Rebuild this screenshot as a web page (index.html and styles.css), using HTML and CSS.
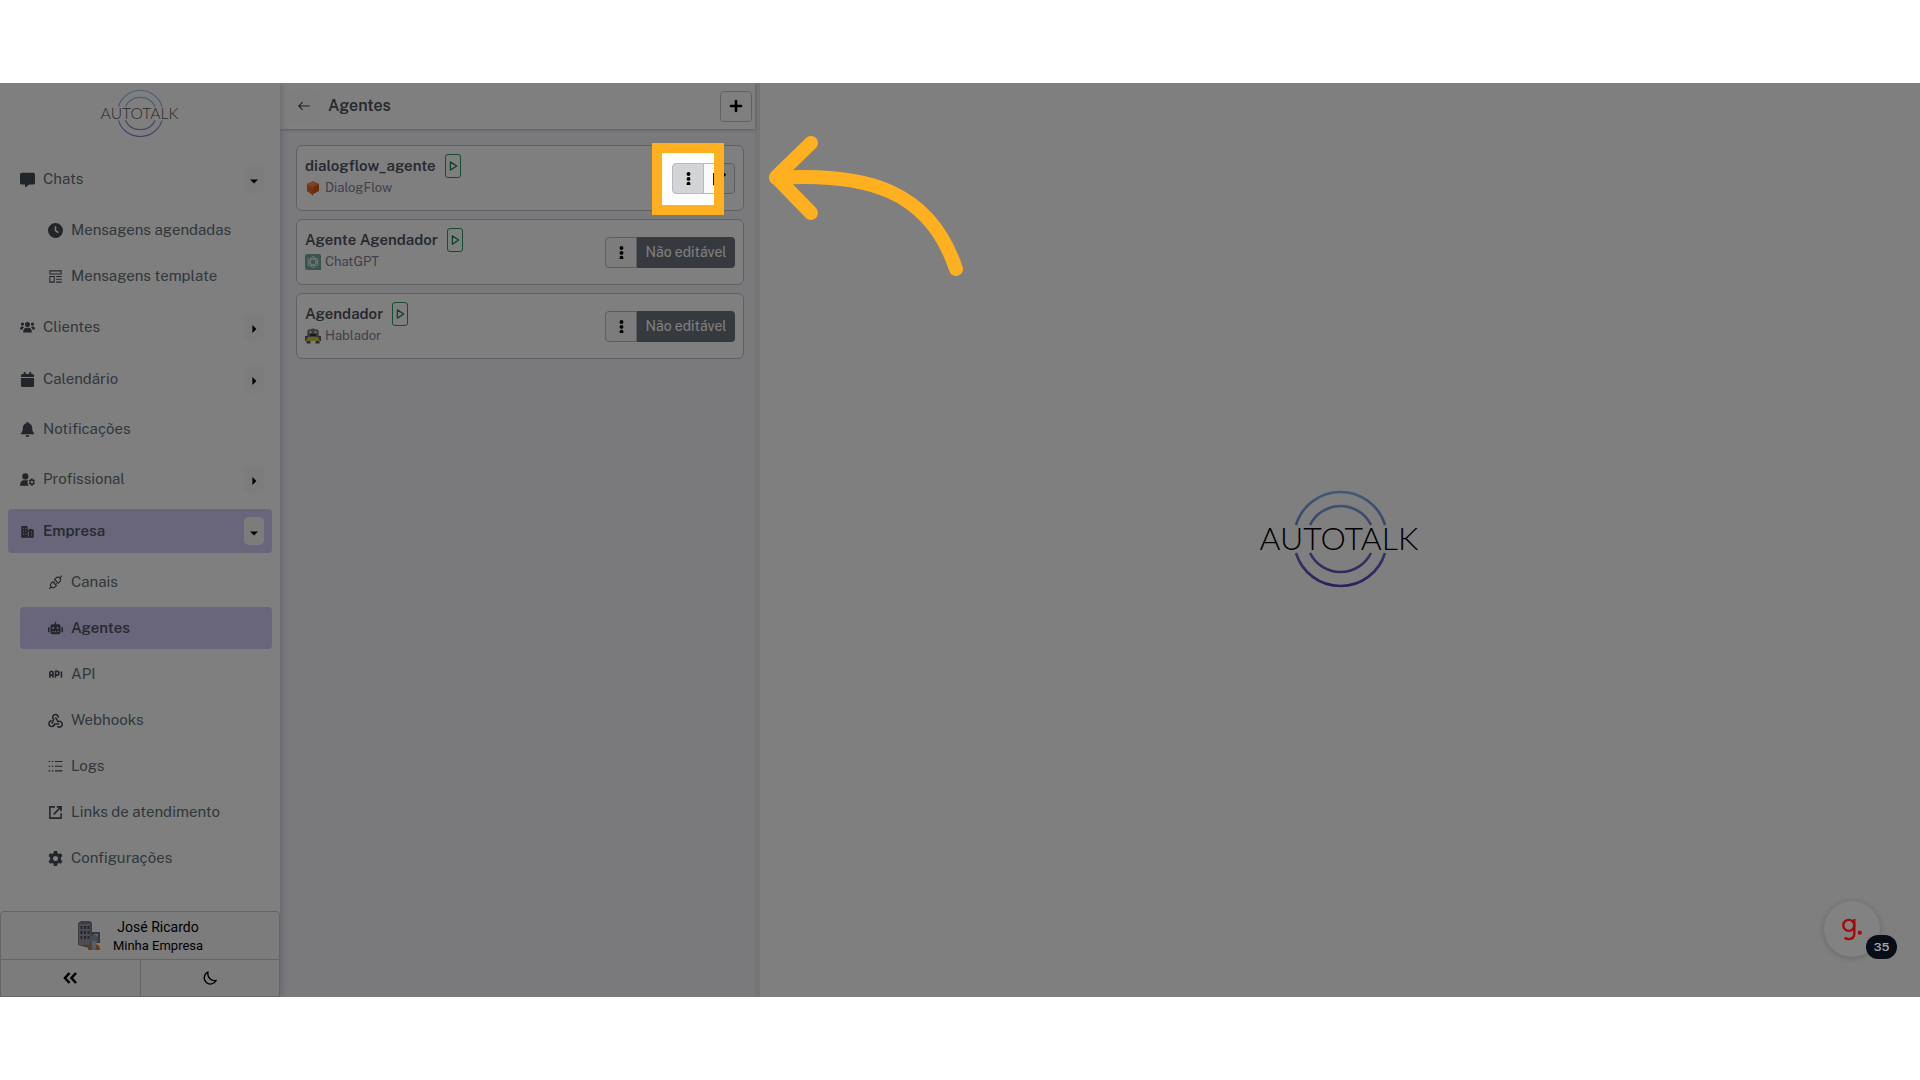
FILE: index.html
```html
<!DOCTYPE html>
<html lang="pt-BR">
<head>
<meta charset="utf-8">
<title>Autotalk - Agentes</title>
<meta name="viewport" content="width=device-width, initial-scale=1">
<link rel="stylesheet" href="styles.css">
</head>
<body>
<svg class="defs" aria-hidden="true">
  <defs>
    <linearGradient id="ring" x1="0" y1="3" x2="0" y2="97" gradientUnits="userSpaceOnUse">
      <stop offset="0" stop-color="#84b2ea"/><stop offset=".4" stop-color="#7088d0"/><stop offset="1" stop-color="#5a44b8"/>
    </linearGradient>
    <symbol id="logo" viewBox="0 0 162 100">
      <g fill="none" stroke="url(#ring)" stroke-width="2.6">
        <path d="M37 36A46.500 46.500 0 0 1 126 36M37 64A46.500 46.500 0 0 0 126 64"/>
        <path d="M51 36A34 34 0 0 1 112 36M51 64A34 34 0 0 0 112 64"/>
      </g>
      <text x="80" y="61" text-anchor="middle" class="logo-text">AUTOTALK</text>
    </symbol>
    <symbol id="play" viewBox="0 0 16 16"><path d="M4.500 2.500v11L13 8z" fill="none" stroke="currentColor" stroke-width="1.700" stroke-linejoin="round"/></symbol>
    <symbol id="dots" viewBox="0 0 16 16"><circle cx="8" cy="2.500" r="2.400"/><circle cx="8" cy="8.500" r="2.400"/><circle cx="8" cy="14.500" r="2.400"/></symbol>
    <symbol id="right" viewBox="0 0 10 10"><path d="M3 0v10l5-5z"/></symbol>
    <symbol id="down" viewBox="0 0 10 10"><path d="M0 3h10L5 8z"/></symbol>
  </defs>
</svg>

<div class="stage">
  <aside class="sidebar">
    <a class="brand" href="#" aria-label="Autotalk"><svg><use href="#logo"/></svg></a>
    <nav>
      <ul class="menu">
        <li>
          <div class="row"><a href="#"><svg viewBox="0 0 24 24"><path d="M3 1h18a3 3 0 0 1 3 3v13a3 3 0 0 1-3 3h-6l-7 5v-5H3a3 3 0 0 1-3-3V4a3 3 0 0 1 3-3z"/></svg>Chats</a><button type="button" aria-label="Recolher Chats"><svg><use href="#down"/></svg></button></div>
          <ul class="submenu">
            <li><a href="#"><svg viewBox="0 0 24 24"><path fill-rule="evenodd" d="M12 0a12 12 0 1 0 0 24 12 12 0 0 0 0-24zM10.800 5h2.400v6.500l4 3-1.400 2-5-3.600z"/></svg>Mensagens agendadas</a></li>
            <li><a href="#"><svg viewBox="0 0 24 24" class="line thin"><path d="M3 3h18v5H3zM3 12h7v9H3zM13 12h9M13 16.500h9M13 21h9"/></svg>Mensagens template</a></li>
          </ul>
        </li>
        <li><div class="row"><a href="#"><svg viewBox="0 0 24 24"><circle cx="12" cy="7" r="4"/><circle cx="4" cy="6.500" r="2.600"/><circle cx="20" cy="6.500" r="2.600"/><path d="M5 20c0-5 2-7.500 5-7.500h4c3 0 5 2.500 5 7.500zM0 15c0-3 1.200-4.800 3.200-4.800 1.500 0 2.500.2 3.300 1.300C5 12.700 4.400 13.700 4 15zM24 15c0-3-1.200-4.800-3.200-4.800-1.500 0-2.500.2-3.300 1.300 1.500 1.200 2.100 2.200 2.500 3.500z"/></svg>Clientes</a><button type="button" aria-label="Expandir Clientes"><svg><use href="#right"/></svg></button></div></li>
        <li><div class="row"><a href="#"><svg viewBox="0 0 24 24"><path d="M6 0h3v3h6V0h3v3h2a2.500 2.500 0 0 1 2.500 2.500V8h-21V5.500A2.500 2.500 0 0 1 4 3h2zM1.500 9.500h21v12A2.500 2.500 0 0 1 20 24H4a2.500 2.500 0 0 1-2.500-2.500z"/></svg>Calendário</a><button type="button" aria-label="Expandir Calendário"><svg><use href="#right"/></svg></button></div></li>
        <li><div class="row plain"><a href="#"><svg viewBox="0 0 24 24"><path d="M10.500 0h3v2c4 .8 6 3.700 6 7.500 0 4 1 6 3 8.500v1.500h-21V18c2-2.500 3-4.500 3-8.500C4.500 5.700 6.500 2.800 10.500 2zM9 21h6a3 3 0 0 1-6 0z"/></svg>Notificações</a></div></li>
        <li><div class="row"><a href="#"><svg viewBox="0 0 24 24"><circle cx="8.500" cy="7" r="5"/><path d="M0 22c0-6 2.500-9 6.500-9h4l2.500.7c-1.300 3-1 5.700.8 8.300z"/><path fill-rule="evenodd" d="M17.700 10.500h2.600l.4 1.800 1.700-.6 1.500 2.300-1.300 1.400v1.200l1.300 1.400-1.500 2.300-1.700-.6-.4 2.300h-2.600l-.4-2.300-1.700.6-1.500-2.300 1.300-1.400v-1.200L14.100 14l1.500-2.300 1.700.6zM19 14a2 2 0 1 0 0 4 2 2 0 0 0 0-4z"/></svg>Profissional</a><button type="button" aria-label="Expandir Profissional"><svg><use href="#right"/></svg></button></div></li>
        <li>
          <div class="row active"><a href="#"><svg viewBox="0 0 24 24"><path fill-rule="evenodd" d="M2 3h10v6h3V7l7 2v13H2zM4.500 6v2h1.500V6zm4 0v2H10V6zm-4 4.500v2h1.500v-2zm4 0v2H10v-2zm-4 4.500v2h1.500v-2zm4 0v2H10v-2zm4-3v8H14v-8zm5 0v2H19v-2zm0 4.500v2H19v-2z"/></svg>Empresa</a><button type="button" aria-label="Recolher Empresa"><svg><use href="#down"/></svg></button></div>
          <ul class="submenu">
            <li><a href="#"><svg viewBox="0 0 24 24" class="line thin"><path d="M2 22l3-3M19 5l3-4M5 19c-2-2-1.500-4 0-5.500L7.500 11l6 6-2.500 2.500C9.500 21 7 21 5 19zM9 12.500l2-2M12 15.500l2-2M19 5c2 2 1.500 4 0 5.500L16.500 13l-6-6L13 4.500C14.500 3 17 3 19 5z"/></svg>Canais</a></li>
            <li class="active"><a href="#" aria-current="page"><svg viewBox="0 0 24 24"><path fill-rule="evenodd" d="M11 1h2v4h4a3 3 0 0 1 3 3v10a3 3 0 0 1-3 3H7a3 3 0 0 1-3-3V8a3 3 0 0 1 3-3h4zM8.500 9.500a1.700 1.700 0 1 0 0 3.400 1.700 1.700 0 0 0 0-3.400zm7 0a1.700 1.700 0 1 0 0 3.400 1.700 1.700 0 0 0 0-3.400zM7 16v2h2v-2zm4 0v2h2v-2zm4 0v2h2v-2z"/><path d="M0 10h2.500v8H0zM21.500 10H24v8h-2.500z"/></svg>Agentes</a></li>
            <li><a href="#"><svg viewBox="0 0 24 24" class="line"><path d="M3 17V9.500Q3 7 5.500 7T8 9.500V17M3 13h5M12 17V7h3q2.500 0 2.500 3T15 13h-3M21.500 7v10"/></svg>API</a></li>
            <li><a href="#"><svg viewBox="0 0 24 24" class="line"><path d="M16.500 7.500a4.500 4.500 0 1 0-7.300 3L6 17M12 7l4 7a4.500 4.500 0 1 1-1 7M6 12.500a4.500 4.500 0 1 0 4.500 5H18"/></svg>Webhooks</a></li>
            <li><a href="#"><svg viewBox="0 0 24 24" class="line thin"><path d="M1 4h2.500M6 4h2.500M11 4h12M1 11.500h2.500M6 11.500h2.500M11 11.500h12M1 19h2.500M6 19h2.500M11 19h12"/></svg>Logs</a></li>
            <li><a href="#"><svg viewBox="0 0 24 24" class="line"><path d="M11 3H3v18h18v-8M14 3h7v7M21 3L9 15"/></svg>Links de atendimento</a></li>
            <li><a href="#"><svg viewBox="0 0 24 24"><path fill-rule="evenodd" d="M9.500 0h5l.8 3.600 1.900 1.100 3.500-1.100 2.500 4.300-2.700 2.500v3.200l2.700 2.500-2.500 4.300-3.500-1.100-1.900 1.100-.8 3.600h-5l-.8-3.600-1.900-1.100-3.500 1.100-2.500-4.300 2.700-2.500v-3.200L.8 7.900l2.500-4.300 3.500 1.100 1.900-1.100zM12 8a4 4 0 1 0 0 8 4 4 0 0 0 0-8z"/></svg>Configurações</a></li>
          </ul>
        </li>
      </ul>
    </nav>
    <footer class="account">
      <button type="button" class="user">
        <svg viewBox="0 0 24 30"><path d="M1 2l3-2h9l2 2v23l-3 2-11-3z" fill="#7b7b84"/><path d="M2 3h11v21H2z" fill="#9a9aa2"/><path d="M3.500 5h2v3h-2zm3.500 0h2v3H7zm3.500 0h2v3h-2zm-7 5h2v3h-2zm3.500 0h2v3H7zm3.500 0h2v3h-2zm-7 5h2v3h-2zm3.500 0h2v3H7zm3.500 0h2v3h-2z" fill="#4b4c70"/><path d="M15 11h8v11h-8z" fill="#6d7080"/><path d="M17 13h4v3h-4z" fill="#b9c6e8"/><path d="M11 29c0-4 2-6 6-6s6 2 6 6z" fill="#e0702a"/><circle cx="17" cy="18" r="4" fill="#8b98aa"/><path d="M14.500 20h5L18.500 29h-3z" fill="#a5bfd2"/></svg>
        <span><b>José Ricardo</b><small>Minha Empresa</small></span>
      </button>
      <div class="tools">
        <button type="button" aria-label="Recolher menu"><svg viewBox="0 0 16 16"><path d="M7.500 3L3 8l4.500 5M14 3L9.500 8l4.500 5" fill="none" stroke="currentColor" stroke-width="2.600"/></svg></button>
        <button type="button" aria-label="Modo escuro"><svg viewBox="0 0 16 16"><path d="M6 2a6.300 6.300 0 1 0 8.300 8.300C9.500 11.700 5 7.500 6 2z" fill="none" stroke="currentColor" stroke-width="1.300" stroke-linejoin="round"/></svg></button>
      </div>
    </footer>
  </aside>

  <section class="panel">
    <header class="panel-head">
      <button type="button" class="back" aria-label="Voltar"><svg viewBox="0 0 16 16"><path d="M14.500 8H2M6.500 3.500L2 8l4.500 4.500" fill="none" stroke="currentColor" stroke-width="1.300"/></svg></button>
      <h1>Agentes</h1>
      <button type="button" class="add" aria-label="Adicionar agente"><svg viewBox="0 0 16 16"><path d="M8 3v10M3 8h10" stroke="currentColor" stroke-width="2.600" stroke-linecap="round"/></svg></button>
    </header>
    <ul class="agents">
      <li class="card">
        <div class="info">
          <h2>dialogflow_agente <button type="button" class="run" aria-label="Executar"><svg><use href="#play"/></svg></button></h2>
          <p><svg viewBox="0 0 16 16"><path d="M8 1l6 2.800L8 7 2 3.800z" fill="#f08c45"/><path d="M2 3.800L8 7l6-3.200v7L8 14v2l-2.500-2.500L2 11.200z" fill="#e46a1e"/><path d="M8 7l6-3.200v7L8 14z" fill="#d15c14"/></svg>DialogFlow</p>
        </div>
        <div class="actions">
          <button type="button" class="more pressed" aria-label="Opções"><svg><use href="#dots"/></svg></button>
          <button type="button" class="edit" aria-label="Editar"><svg viewBox="0 0 16 16"><path d="M8 3H2v11.500h10V9M6 10l.5-2.500L12 2l2 2-5.500 5.500z" fill="none" stroke="currentColor" stroke-width="1.600"/></svg></button>
          <div class="spotlight"></div>
          <svg class="pointer" viewBox="0 0 200 148"><path d="M43 7L8 41l35 36M8 42C100 36 162 55 188 133"/></svg>
        </div>
      </li>
      <li class="card">
        <div class="info">
          <h2>Agente Agendador <button type="button" class="run" aria-label="Executar"><svg><use href="#play"/></svg></button></h2>
          <p><svg viewBox="0 0 16 16"><path d="M2 0h12a2 2 0 0 1 2 2v14H2a2 2 0 0 1-2-2V2a2 2 0 0 1 2-2z" fill="#74aa9c"/><g fill="none" stroke="#e2f3ee" stroke-width=".9"><ellipse cx="8" cy="8" rx="2.800" ry="5.500"/><ellipse cx="8" cy="8" rx="2.800" ry="5.500" transform="rotate(60 8 8)"/><ellipse cx="8" cy="8" rx="2.800" ry="5.500" transform="rotate(120 8 8)"/></g></svg>ChatGPT</p>
        </div>
        <div class="actions">
          <button type="button" class="more" aria-label="Opções"><svg><use href="#dots"/></svg></button>
          <button type="button" class="locked">Não editável</button>
        </div>
      </li>
      <li class="card">
        <div class="info">
          <h2>Agendador <button type="button" class="run" aria-label="Executar"><svg><use href="#play"/></svg></button></h2>
          <p><svg viewBox="0 0 16 16"><path d="M2.500 5a2.500 2.500 0 0 1 3-3.500Q8-.5 10.500 1.500a2.500 2.500 0 0 1 3 3.500l.5 4H2z" fill="#74757c"/><circle cx="5.500" cy="4" r="1.200" fill="#ddd"/><circle cx="10.500" cy="4" r="1.200" fill="#ddd"/><path d="M5 6h6v2H5z" fill="#333"/><path d="M0 8h3v5H0zM13 8h3v5h-3z" fill="#62636a"/><path d="M3 9h10l2 4H1z" fill="#d9c93a"/><path d="M1.500 13h4v2.500h-4zM10.500 13h4v2.500h-4z" fill="#55565c"/></svg>Hablador</p>
        </div>
        <div class="actions">
          <button type="button" class="more" aria-label="Opções"><svg><use href="#dots"/></svg></button>
          <button type="button" class="locked">Não editável</button>
        </div>
      </li>
    </ul>
  </section>

  <main class="empty"><svg role="img" aria-label="Autotalk"><use href="#logo"/></svg></main>

  <button type="button" class="widget" aria-label="Guia">
    <svg viewBox="0 0 24 28"><g fill="none" stroke="currentColor" stroke-width="2.600"><circle cx="8.500" cy="10" r="6"/><path d="M14.500 3V19q0 6-6 6-2.500 0-4.500-1.500"/></g><circle cx="20.500" cy="18" r="2.300" fill="currentColor"/></svg>
    <span>35</span>
  </button>
</div>
</body>
</html>
```
FILE: styles.css
```css
* { box-sizing: border-box; }

body {
  margin: 0;
  padding: 83px 0;
  min-height: 100vh;
  display: flex;
  flex-direction: column;
  background: #fff;
  font: 15px/24px "Public Sans", Inter, "Liberation Sans", sans-serif;
  color: #646e78;
}

ul { list-style: none; margin: 0; padding: 0; }
h1, h2, p { margin: 0; }
a { color: inherit; text-decoration: none; }
svg { display: block; flex: none; fill: currentColor; }
button {
  display: flex;
  align-items: center;
  justify-content: center;
  margin: 0;
  padding: 0;
  border: 0;
  background: #f8f9fa;
  color: #000;
  font: inherit;
}

.defs { position: absolute; width: 0; height: 0; }
.logo-text { font: 300 32px Lato, sans-serif; fill: #000; }

.stage {
  position: relative;
  flex: 1;
  display: flex;
  overflow: hidden;
}

/* Sidebar */
.sidebar {
  flex: 0 0 280px;
  display: flex;
  flex-direction: column;
  background: #fff;
  box-shadow: 0 0 8px rgba(80, 80, 130, .35);
  z-index: 1;
}
.brand {
  display: flex;
  justify-content: center;
  height: 74px;
  padding-top: 6px;
}
.brand svg { width: 80px; height: 49px; opacity: .7; }

.menu, .submenu { display: flex; flex-direction: column; }
.menu { gap: 8px; padding: 0 8px; }
.submenu { gap: 4px; padding: 8px 0 0 12px; }
.row {
  display: flex;
  align-items: center;
  height: 44px;
  padding: 0 8px 0 12px;
  border-radius: 4px;
}
.row.plain { height: 40px; }
.menu a { display: flex; align-items: center; flex: 1; gap: 8px; }
.menu a svg { width: 15px; height: 15px; color: #444a54; }
.submenu a { height: 42px; padding-left: 28px; }
.submenu li { border-radius: 4px; }
.menu .active { background: #d3ccf6; font-weight: 600; color: #505662; }
.menu .line { fill: none; stroke: currentColor; stroke-width: 2.5; }
.menu .thin { stroke-width: 1.7; }
.row button { width: 20px; height: 28px; border-radius: 5px; padding-top: 3px; }
.row button svg { width: 8px; height: 8px; }

.account { margin-top: auto; font-family: Roboto, sans-serif; }
.user {
  width: 100%;
  height: 49px;
  gap: 12px;
  border: 1px solid #c8cad4;
  border-radius: 4px 4px 0 0;
}
.user > svg { width: 24px; height: 30px; }
.user b, .user small { display: block; font-weight: 400; }
.user b { font-size: 14px; line-height: 20px; }
.user small { font-size: 13px; line-height: 18px; }
.tools { display: flex; }
.tools button { flex: 1; height: 37px; border: 1px solid #c8cad4; border-top: 0; }
.tools button + button { border-left: 0; }
.tools svg { width: 16px; height: 16px; }

/* Agent list */
.panel {
  flex: 0 0 25%;
  padding-right: 5px;
  background: linear-gradient(#eaeaf0, #eaeaf0) right / 5px 100% no-repeat #f4f5f9;
}
.panel-head {
  display: flex;
  align-items: center;
  gap: 9px;
  height: 46px;
  padding: 0 3px 0 9px;
  background: #fff;
  box-shadow: 0 1px 3px rgba(80, 80, 130, .4);
}
.panel-head h1 { flex: 1; font-size: 16px; font-weight: 600; color: #4c525c; }
.back, .add { width: 32px; height: 31px; border-radius: 4px; }
.back { width: 30px; background: #fdfdfd; border: 1px solid #f8f8f8; color: #444; }
.back svg { width: 14px; height: 14px; }
.add { border: 1px solid #bfc3cb; background: #fff; }
.add svg { width: 16px; height: 16px; }

.agents { display: flex; flex-direction: column; gap: 8px; padding: 16px 11px 16px 16px; }
.card {
  display: flex;
  align-items: center;
  justify-content: space-between;
  height: 66px;
  padding: 0 8px;
  border: 1px solid #bcc0c8;
  border-radius: 6px;
  background: #fff;
}
.info { padding-bottom: 4px; }
.info h2 {
  display: flex;
  align-items: center;
  gap: 9px;
  font-size: 15px;
  line-height: 24px;
  font-weight: 600;
  color: #4c525c;
}
.run { width: 16px; height: 24px; border: 1px solid #2b9a63; border-radius: 3px; background: none; color: #198754; }
.run svg { width: 12px; height: 12px; }
.info p { display: flex; align-items: center; gap: 4px; font-size: 13px; line-height: 20px; color: #7e8096; }
.info p svg { width: 16px; height: 16px; }

.actions { position: relative; display: flex; }
.actions button { height: 31px; border: 1px solid #b4bac2; }
.actions .more { width: 32px; border-radius: 4px 0 0 4px; }
.more svg { width: 13px; height: 13px; }
.actions .pressed { background: #d3d4d5; }
.actions .edit { width: 32px; margin-left: -1px; border-radius: 0 4px 4px 0; }
.edit svg { width: 15px; height: 15px; }
.actions .locked { min-width: 98px; padding: 0 8px; border: 0; border-radius: 0 4px 4px 0; background: #6c757d; color: #fff; font-size: 14px; }

/* Guided tour: highlighted control, dimmed surroundings, arrow */
.spotlight {
  position: absolute;
  z-index: 10;
  top: -20px;
  left: -20px;
  width: 72px;
  height: 72px;
  border: 10px solid #ffb020;
  box-shadow: 0 0 0 200vmax rgba(0, 0, 0, .5);
  pointer-events: none;
}
.pointer {
  position: absolute;
  z-index: 11;
  top: -27px;
  left: 96px;
  width: 200px;
  height: 148px;
  fill: none;
  stroke: #ffb020;
  stroke-width: 14;
  stroke-linecap: round;
  stroke-linejoin: round;
  pointer-events: none;
}

.empty { flex: 1; display: flex; align-items: center; justify-content: center; padding-bottom: 3px; background: #fff; }
.empty svg { width: 162px; height: 100px; }

.widget {
  position: absolute;
  z-index: 12;
  right: 40px;
  bottom: 40px;
  width: 56px;
  height: 56px;
  border-radius: 50%;
  background: #828282;
  box-shadow: 0 1px 6px rgba(0, 0, 0, .2);
  color: #a80808;
}
.widget svg { width: 22px; height: 26px; }
.widget span {
  position: absolute;
  left: 42px;
  top: 34px;
  width: 31px;
  height: 24px;
  border-radius: 12px;
  background: #080d18;
  color: #a4a6aa;
  font-size: 12px;
  font-weight: 600;
  line-height: 24px;
}
```
